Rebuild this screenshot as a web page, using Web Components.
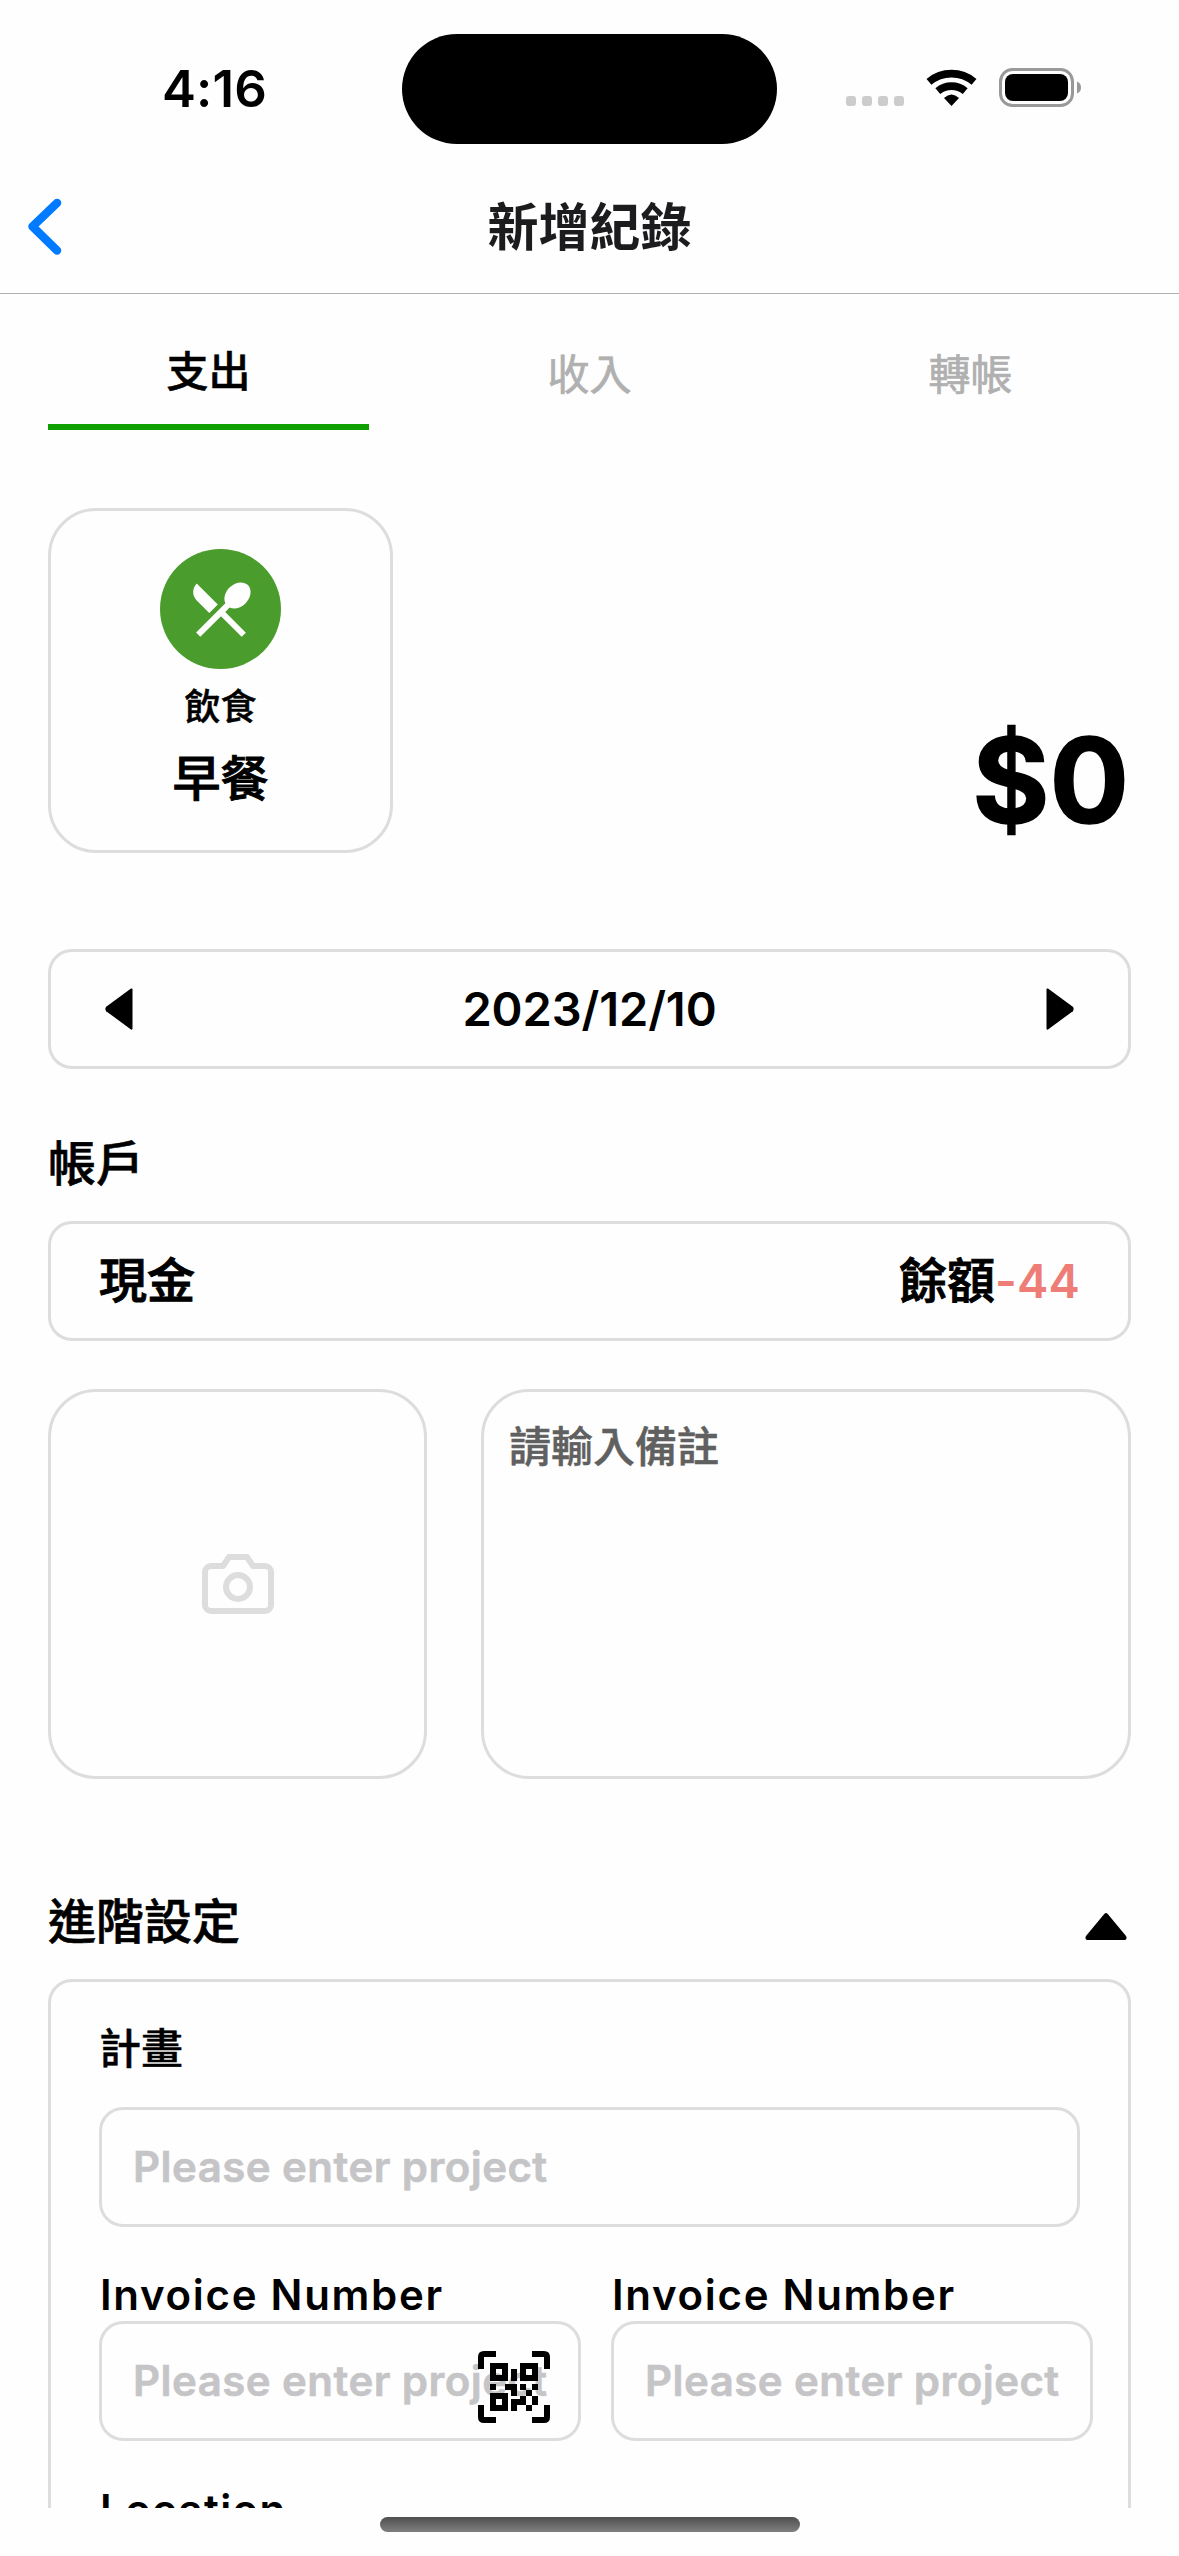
<!DOCTYPE html>
<html lang="zh-Hant">
<head>
<meta charset="utf-8">
<title>新增紀錄</title>
<style>
  html, body { margin: 0; background: #fefefe; }
  body { font-family: Inter, "Noto Sans CJK TC", sans-serif; color: #000; width: 1179px; height: 2556px; overflow: hidden; }
</style>
</head>
<body>
<record-screen></record-screen>
<script>
const define = (name, html) => customElements.define(name, class extends HTMLElement {
  constructor() {
    super();
    const t = document.createElement('template');
    t.innerHTML = html;
    this.attachShadow({ mode: 'open' }).append(t.content.cloneNode(true));
  }
});

define('status-bar', `
<style>
  :host { display: grid; grid-template-columns: 402px 375px 1fr; height: 177px; box-sizing: border-box; padding-top: 34px; }
  .time { text-align: center; font-size: 51px; font-weight: 600; line-height: 109px; padding-left: 27px; letter-spacing: .2px; }
  .island { height: 110px; border-radius: 55px; background: #000; }
  svg { display: block; }
  .icons { padding: 24px 0 0 69px; }
</style>
<div class="time">4:16</div>
<div class="island"></div>
<div class="icons"><svg width="240" height="60" viewBox="846 58 240 60">
  <g fill="#ccc"><rect x="846" y="96" width="10" height="10" rx="3"/><rect x="862" y="96" width="10" height="10" rx="3"/><rect x="878" y="96" width="10" height="10" rx="3"/><rect x="894" y="96" width="10" height="10" rx="3"/></g>
  <g fill="none" stroke="#000" stroke-width="7.6"><path d="M929 81.8A35 35 0 0 1 974 81.8"/><path d="M937.8 91.1A21.500 21.500 0 0 1 965.200 91.1"/></g>
  <path d="M951.500 106L944 98Q951.500 91 959 98Z"/>
  <rect x="1000.500" y="69.500" width="72" height="36" rx="12" fill="none" stroke="#999" stroke-width="3"/>
  <rect x="1005" y="74" width="63" height="27" rx="8"/>
  <path d="M1077 81.500Q1081 83 1081 87.500T1077 93.500Z" fill="#999"/>
</svg></div>`);

define('nav-header', `
<style>
  :host { display: grid; grid-template-columns: 120px 1fr 120px; height: 117px; box-sizing: border-box; border-bottom: 1px solid #b2b2b2; }
  .t { text-align: center; font-size: 51px; font-weight: 700; line-height: 101px; color: #1c1c1e; }
  svg { display: block; }
</style>
<svg width="120" height="100" viewBox="0 177 120 100"><path d="M57 203L32.500 226.500L57 250.500" fill="none" stroke="#007aff" stroke-width="8.500" stroke-linecap="round" stroke-linejoin="round"/></svg>
<div class="t"><slot></slot></div>`);

define('tab-item', `
<style>
  :host { display: block; width: 321px; height: 136px; box-sizing: border-box; padding-top: 51px; text-align: center; font-size: 42px; line-height: 60px; color: #b0b0b0; -webkit-text-stroke: .7px #b0b0b0; }
  :host([active]) { padding-top: 48px; color: #000; font-weight: 500; border-bottom: 6px solid #0e9f00; -webkit-text-stroke: .5px #000; }
</style><slot></slot>`);

define('tab-bar', `<style>:host { display: flex; justify-content: space-between; }</style><slot></slot>`);

define('category-card', `
<style>
  :host { display: flex; flex-direction: column; align-items: center; width: 345px; height: 345px; box-sizing: border-box; border: 3px solid #ddd; border-radius: 48px; padding-top: 38px; }
  .c { width: 121px; height: 120px; border-radius: 50%; background: #4a9c2d; display: flex; align-items: center; justify-content: center; }
  .k { font-size: 36px; font-weight: 500; line-height: 50px; margin-top: 13px; -webkit-text-stroke: .5px #000; }
  .n { font-size: 48px; font-weight: 500; line-height: 66px; margin-top: 14px; -webkit-text-stroke: 1px #000; }
</style>
<div class="c"><svg width="72" height="72" viewBox="0 0 24 24" fill="#fff"><path d="M8.1 13.34l2.83-2.83L3.91 3.5c-1.56 1.56-1.56 4.09 0 5.66l4.19 4.18zm6.78-1.81c1.53.71 3.68.21 5.27-1.38 1.91-1.91 2.28-4.65.81-6.12-1.46-1.46-4.2-1.1-6.12.81-1.59 1.59-2.09 3.74-1.38 5.27L3.7 19.87l1.41 1.41L12 14.41l6.88 6.88 1.41-1.41L13.41 13l1.47-1.47z"/></svg></div>
<div class="k"><slot name="group"></slot></div>
<div class="n"><slot></slot></div>`);

define('amount-text', `
<style>:host { display: block; font-size: 118px; font-weight: 700; line-height: 140px; padding: 0 2px 3px 0; -webkit-text-stroke: 1.5px #000; }</style><slot></slot>`);

define('outline-box', `
<style>:host { display: flex; align-items: center; justify-content: space-between; height: 120px; box-sizing: border-box; border: 3px solid #ddd; border-radius: 24px; padding: 0 48px; }</style><slot></slot>`);

define('date-stepper', `
<style>
  .row { display: flex; flex: 1; align-items: center; justify-content: space-between; padding: 0 6px; }
  :host { display: block; }
  .d { font-size: 47px; font-weight: 600; letter-spacing: -.1px; padding-bottom: 2px; }
  svg { display: block; }
</style>
<outline-box><div class="row">
<svg width="28" height="42" viewBox="0 0 28 42"><path d="M27.500 1.500V40.500Q27.500 42 26 41.500L1.200 23.200Q-.500 21 1.200 18.800L26 .500Q27.500 0 27.500 1.500Z"/></svg>
<span class="d"><slot></slot></span>
<svg width="28" height="42" viewBox="0 0 28 42"><path d="M.500 1.500V40.500Q.500 42 2 41.500L26.800 23.200Q28.500 21 26.800 18.800L2 .500Q.500 0 .500 1.500Z"/></svg>
</div></outline-box>`);

define('account-row', `
<style>
  :host { display: block; font-size: 48px; font-weight: 500; line-height: 60px; }
  span { padding-bottom: 1px; -webkit-text-stroke: 1px #000; }
  .v { color: #ee7c77; font-size: 47px; letter-spacing: .2px; font-weight: 600; -webkit-text-stroke: 0; }
</style>
<outline-box><span><slot></slot></span><span>餘額<b class="v"><slot name="balance"></slot></b></span></outline-box>`);

define('section-title', `
<style>:host { display: flex; justify-content: space-between; font-size: 48px; font-weight: 500; line-height: 66px; margin-bottom: 26px; } span { padding-top: 2px; margin-bottom: -2px; -webkit-text-stroke: .6px #000; }</style>
<span><slot></slot></span><slot name="action"></slot>`);

define('collapse-arrow', `
<style>:host { display: block; padding: 26px 4px 0 0; } svg { display: block; }</style>
<svg width="42" height="27" viewBox="0 0 43 27" preserveAspectRatio="none"><path d="M19.700 1Q21.500-.800 23.300 1L42 23Q43.500 26 41 27H2Q-.500 26 1 23Z"/></svg>`);

define('photo-picker', `
<style>:host { display: flex; align-items: center; justify-content: center; width: 379px; height: 390px; box-sizing: border-box; border: 3px solid #ddd; border-radius: 48px; }</style>
<svg width="72" height="72" viewBox="0 0 24 24" fill="none" stroke="#ddd" stroke-width="2" stroke-linecap="round" stroke-linejoin="round"><path d="M23 19a2 2 0 0 1-2 2H3a2 2 0 0 1-2-2V8a2 2 0 0 1 2-2h4l2-3h6l2 3h4a2 2 0 0 1 2 2z"/><circle cx="12" cy="13" r="4"/></svg>`);

define('note-box', `
<style>:host { display: block; width: 650px; height: 390px; box-sizing: border-box; border: 3px solid #ddd; border-radius: 48px; padding: 25px 25px; font-size: 42px; font-weight: 500; line-height: 60px; color: #606060; -webkit-text-stroke: .5px #606060; }</style><slot></slot>`);

define('text-field', `
<style>
  :host { display: block; font-size: 42px; font-weight: 600; letter-spacing: 1.7px; }
  .l { line-height: 52px; height: 52px; padding-left: 1px; }
  :host([tall]) .l { line-height: 60px; height: 60px; margin-bottom: 29px; letter-spacing: 1.4px; }
  :host([cjk]) .l { letter-spacing: 0; font-weight: 500; line-height: 62px; padding-left: 0; -webkit-text-stroke: .5px #000; }
  .f { position: relative; height: 120px; box-sizing: border-box; border: 3px solid #ddd; border-radius: 24px; padding-left: 31px; line-height: 114px; font-size: 42px; font-weight: 600; letter-spacing: .45px; color: #c5c5c7; white-space: nowrap; -webkit-text-stroke: .6px #c5c5c7; }
  ::slotted([slot=icon]) { position: absolute; right: 28px; top: 27px; }
</style>
<div class="l"><slot></slot></div>
<div class="f"><slot name="hint"></slot><slot name="icon"></slot></div>`);

define('scan-icon', `
<style>:host { display: block; width: 72px; height: 72px; } svg { display: block; }</style>
<svg width="72" height="72" viewBox="0 0 12 12" shape-rendering="geometricPrecision">
<path d="M0 3V1Q0 0 1 0H3V1H1V3ZM9 0H11Q12 0 12 1V3H11V1H9ZM0 9H1V11H3V12H1Q0 12 0 11ZM11 9H12V11Q12 12 11 12H9V11H11Z"/>
<path fill-rule="evenodd" d="M2 2H5V5H2ZM3 3V4H4V3ZM7 2H10V5H7ZM8 3V4H9V3ZM2 7H5V10H2ZM3 8V9H4V8Z"/>
<path d="M5.500 3H6.500V5H5.500ZM2 5.500H3V6.500H2ZM4.500 5.500H6.500V7.500H5.500V6.500H4.500ZM7 5.500H8V6.500H7ZM9 5.500H10V6.500H9ZM8 6.500H9V7.500H8ZM7 7.500H8V9H6.500V10H5.500V8H7ZM9 7.500H10V9H9ZM8 9H9V10H8Z"/></svg>`);

define('advanced-panel', `
<style>
  :host { display: flex; flex-direction: column; box-sizing: border-box; height: 800px; border: 3px solid #ddd; border-radius: 24px; padding: 36px 48px; }
</style><slot></slot>`);

define('field-row', `<style>:host { display: grid; grid-template-columns: 482px 482px; gap: 30px; margin: 42px 0 39px; }</style><slot></slot>`);

define('home-indicator', `
<style>:host { display: flex; justify-content: center; padding-top: 9px; height: 39px; } i { width: 420px; height: 15px; border-radius: 8px; background: linear-gradient(#4f4f4f, #7f7f7f); }</style><i></i>`);

define('record-screen', `
<style>
  :host { display: flex; flex-direction: column; height: 2556px; }
  main { height: 2214px; overflow: hidden; padding: 0 48px; box-sizing: border-box; }
  .top { display: flex; justify-content: space-between; align-items: flex-end; margin: 78px 0 96px; }
  .media { display: flex; justify-content: space-between; margin: 48px 0 108px; }
  .acc { margin-top: 60px; }
</style>
<status-bar></status-bar>
<nav-header>新增紀錄</nav-header>
<main>
  <tab-bar><tab-item active>支出</tab-item><tab-item>收入</tab-item><tab-item>轉帳</tab-item></tab-bar>
  <div class="top"><category-card><span slot="group">飲食</span>早餐</category-card><amount-text>$0</amount-text></div>
  <date-stepper>2023/12/10</date-stepper>
  <section-title class="acc">帳戶</section-title>
  <account-row>現金<span slot="balance">-44</span></account-row>
  <div class="media"><photo-picker></photo-picker><note-box>請輸入備註</note-box></div>
  <section-title>進階設定<collapse-arrow slot="action"></collapse-arrow></section-title>
  <advanced-panel>
    <text-field tall cjk>計畫<span slot="hint">Please enter project</span></text-field>
    <field-row>
      <text-field>Invoice Number<span slot="hint">Please enter project</span><scan-icon slot="icon"></scan-icon></text-field>
      <text-field>Invoice Number<span slot="hint">Please enter project</span></text-field>
    </field-row>
    <text-field tall>Location<span slot="hint"></span></text-field>
  </advanced-panel>
</main>
<home-indicator></home-indicator>`);
</script>
</body>
</html>
